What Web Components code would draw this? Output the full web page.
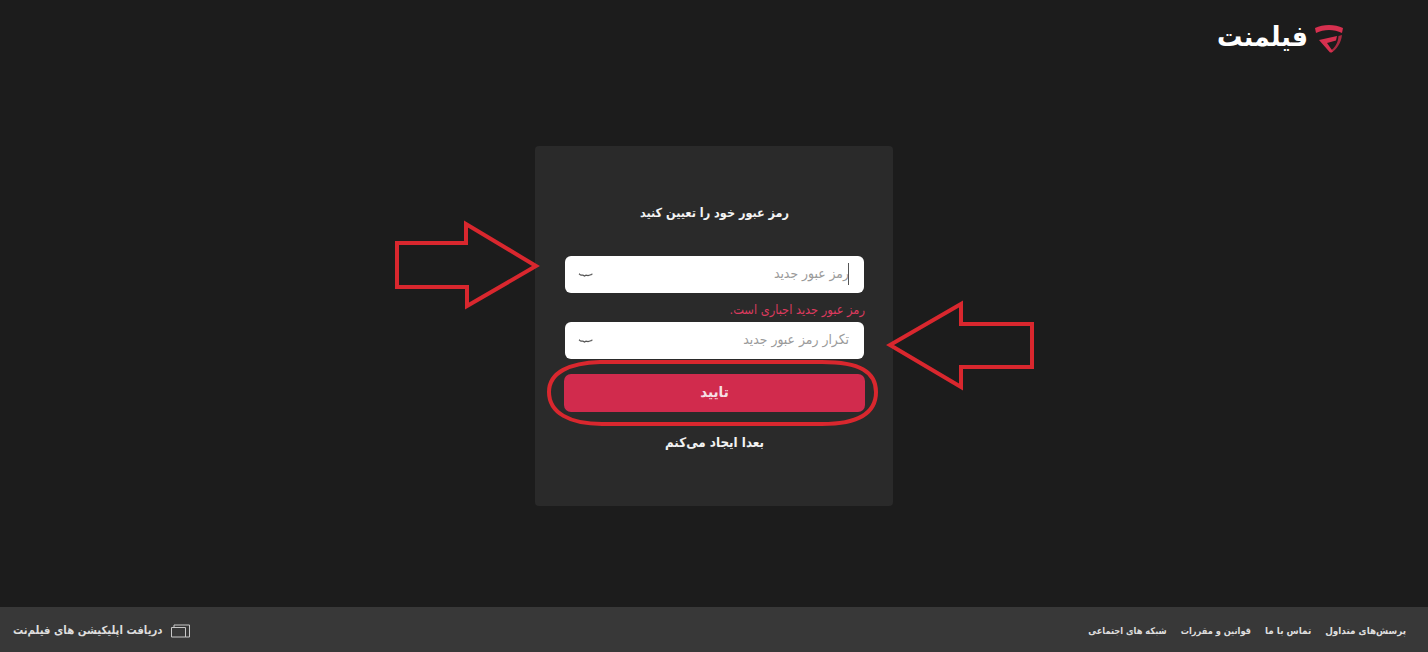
<!DOCTYPE html>
<html lang="fa">
<head>
<meta charset="utf-8">
<title>فیلمنت</title>
<style>
  html, body { margin: 0; height: 100%; }
  body {
    position: relative;
    display: flex;
    flex-direction: column;
    height: 652px;
    overflow: hidden;
    background: #1c1c1c;
    color: #fff;
    font-family: "DejaVu Sans", "Noto Sans", sans-serif;
    font-stretch: condensed;
  }
</style>
</head>
<body dir="rtl">
<fm-header></fm-header>
<fm-main>
  <fm-card heading="رمز عبور خود را تعیین کنید">
    <fm-field placeholder="رمز عبور جدید" focused error="رمز عبور جدید اجباری است."></fm-field>
    <fm-field placeholder="تکرار رمز عبور جدید"></fm-field>
    <fm-button>تایید</fm-button>
    <fm-later>بعدا ایجاد می‌کنم</fm-later>
  </fm-card>
</fm-main>
<fm-footer></fm-footer>
<fm-marks></fm-marks>

<script>
class FmHeader extends HTMLElement {
  constructor() {
    super();
    this.attachShadow({ mode: "open" });
    this.shadowRoot.innerHTML = `
      <style>
        :host { display: flex; height: 68px; padding: 25px 85px 0 0; box-sizing: border-box; align-items: flex-start; gap: 7px; }
        svg { width: 28px; height: 28px; flex: none; }
        .name { font-size: 28px; font-weight: 700; line-height: 24px; color: #fff; }
      </style>
      <svg viewBox="0 0 28 28">
        <path d="M0 3 C8 -1 20 -1 28 3 L27 8 C19 4 9 4 1 8Z" fill="#d6304f"/>
        <path d="M27 10 C26 18 22 24 16 28 L15 26 C20 23 23 18 23.5 11Z" fill="#a82a40"/>
        <path d="M4 15 L22 11 L21 15.5 L12 18 L18 26.5 L15 27.5Z" fill="#d6304f"/>
      </svg>
      <span class="name">فیلمنت</span>
    `;
  }
}

class FmMain extends HTMLElement {
  constructor() {
    super();
    this.attachShadow({ mode: "open" });
    this.shadowRoot.innerHTML = `
      <style>
        :host { display: flex; flex: 1; justify-content: center; align-items: center; padding-bottom: 23px; }
      </style>
      <slot></slot>
    `;
  }
}

class FmCard extends HTMLElement {
  constructor() {
    super();
    this.attachShadow({ mode: "open" });
    this.shadowRoot.innerHTML = `
      <style>
        :host {
          display: flex;
          flex-direction: column;
          box-sizing: border-box;
          width: 358px;
          height: 360px;
          padding: 56px 29px 0 30px;
          background: #2a2a2a;
          border-radius: 4px;
        }
        h1 { margin: 0 0 32px; font-size: 12.5px; font-weight: 700; line-height: 22px; text-align: center; color: #f4f4f4; }
      </style>
      <h1></h1>
      <slot></slot>
    `;
  }
  connectedCallback() {
    this.shadowRoot.querySelector("h1").textContent = this.getAttribute("heading");
  }
}

class FmField extends HTMLElement {
  constructor() {
    super();
    this.attachShadow({ mode: "open" });
    this.shadowRoot.innerHTML = `
      <style>
        :host { display: block; }
        .box {
          position: relative;
          display: flex;
          align-items: center;
          justify-content: space-between;
          box-sizing: border-box;
          height: 37px;
          padding: 0 15px 0 13px;
          background: #fff;
          border-radius: 6px;
          color: #9a9a9a;
          font-size: 13.8px;
        }
        .ph { margin-bottom: 4px; }
        .caret { position: absolute; right: 15px; top: 7px; width: 1px; height: 22px; background: #555; display: none; }
        :host([focused]) .caret { display: block; }
        svg { width: 16px; height: 6px; flex: none; }
        .error { height: 29px; line-height: 33px; font-size: 12.7px; color: #dc3a5e; margin-right: -1px; white-space: nowrap; }
        .error:empty { display: none; }
      </style>
      <div class="box">
        <span class="ph"></span>
        <i class="caret"></i>
        <svg viewBox="0 0 16 6"><path d="M1 2 L3 3.2 L5 3.2 L6.5 4 L8 3.2 L10 3.6 L12 3 L14 2.4" fill="none" stroke="#555" stroke-width="1.3"/><path d="M14 1.5 V2.8 M1.5 1.5 V2.5" stroke="#777" stroke-width="1"/></svg>
      </div>
      <div class="error"></div>
    `;
  }
  connectedCallback() {
    this.shadowRoot.querySelector(".ph").textContent = this.getAttribute("placeholder");
    this.shadowRoot.querySelector(".error").textContent = this.getAttribute("error") || "";
  }
}

class FmButton extends HTMLElement {
  constructor() {
    super();
    this.attachShadow({ mode: "open" });
    this.shadowRoot.innerHTML = `
      <style>
        :host {
          display: flex;
          align-items: center;
          justify-content: center;
          box-sizing: border-box;
          height: 38px;
          padding-bottom: 3px;
          margin: 15px -1px 0;
          border-radius: 7px;
          background: #d12b4d;
          color: #f6dfe4;
          font-size: 15px;
          font-weight: 700;
        }
      </style>
      <slot></slot>
    `;
  }
}

class FmLater extends HTMLElement {
  constructor() {
    super();
    this.attachShadow({ mode: "open" });
    this.shadowRoot.innerHTML = `
      <style>
        :host { display: block; margin-top: 21px; text-align: center; font-size: 13.3px; font-weight: 700; line-height: 20px; color: #f2f2f2; }
      </style>
      <slot></slot>
    `;
  }
}

class FmFooter extends HTMLElement {
  constructor() {
    super();
    this.attachShadow({ mode: "open" });
    const links = ["پرسش‌های متداول", "تماس با ما", "قوانین و مقررات", "شبکه های اجتماعی"];
    this.shadowRoot.innerHTML = `
      <style>
        :host {
          display: flex;
          flex: none;
          justify-content: space-between;
          align-items: center;
          box-sizing: border-box;
          height: 45px;
          padding: 2px 22px 0 13px;
          background: #383838;
          color: #dedede;
          font-size: 9.8px;
          font-weight: 700;
          white-space: nowrap;
        }
        nav { display: flex; gap: 14px; align-items: center; }
        nav span:nth-child(n+3) { font-size: 9.2px; }
        .app { display: flex; align-items: center; gap: 8px; font-size: 11.3px; }
        svg { width: 19px; height: 14px; flex: none; }
      </style>
      <nav>${links.map(l => `<span>${l}</span>`).join("")}</nav>
      <div class="app">
        <svg viewBox="0 0 19 14" fill="none" stroke="#c8c8c8" stroke-width="1">
          <path d="M3 3.5 V1 H18.5 V13 H14.5"/>
          <path d="M0.5 3.5 H14.5 V13 H0.5Z"/>
        </svg>
        <span>دریافت اپلیکیشن های فیلم‌نت</span>
      </div>
    `;
  }
}

// red marks drawn over the screenshot
class FmMarks extends HTMLElement {
  constructor() {
    super();
    this.attachShadow({ mode: "open" });
    this.shadowRoot.innerHTML = `
      <style>
        :host { position: absolute; inset: 0; pointer-events: none; }
        svg { display: block; width: 1428px; height: 652px; }
        path { fill: none; stroke: #d9272e; stroke-width: 4; stroke-linejoin: miter; }
      </style>
      <svg viewBox="0 0 1428 652">
        <path d="M397 243 H466 V224 L536 266 L467 306 V287 H397 Z"/>
        <path d="M1032 324 H961 V304 L890 345 L961 387 V367 H1032 Z"/>
        <path d="M600 362 C570 363 549 372 549 392 C549 413 570 424 602 424 H822 C860 424 876 412 876 392 C876 372 860 362 822 362 Z" stroke-width="3"/>
      </svg>
    `;
  }
}

customElements.define("fm-header", FmHeader);
customElements.define("fm-main", FmMain);
customElements.define("fm-card", FmCard);
customElements.define("fm-field", FmField);
customElements.define("fm-button", FmButton);
customElements.define("fm-later", FmLater);
customElements.define("fm-footer", FmFooter);
customElements.define("fm-marks", FmMarks);
</script>
</body>
</html>
